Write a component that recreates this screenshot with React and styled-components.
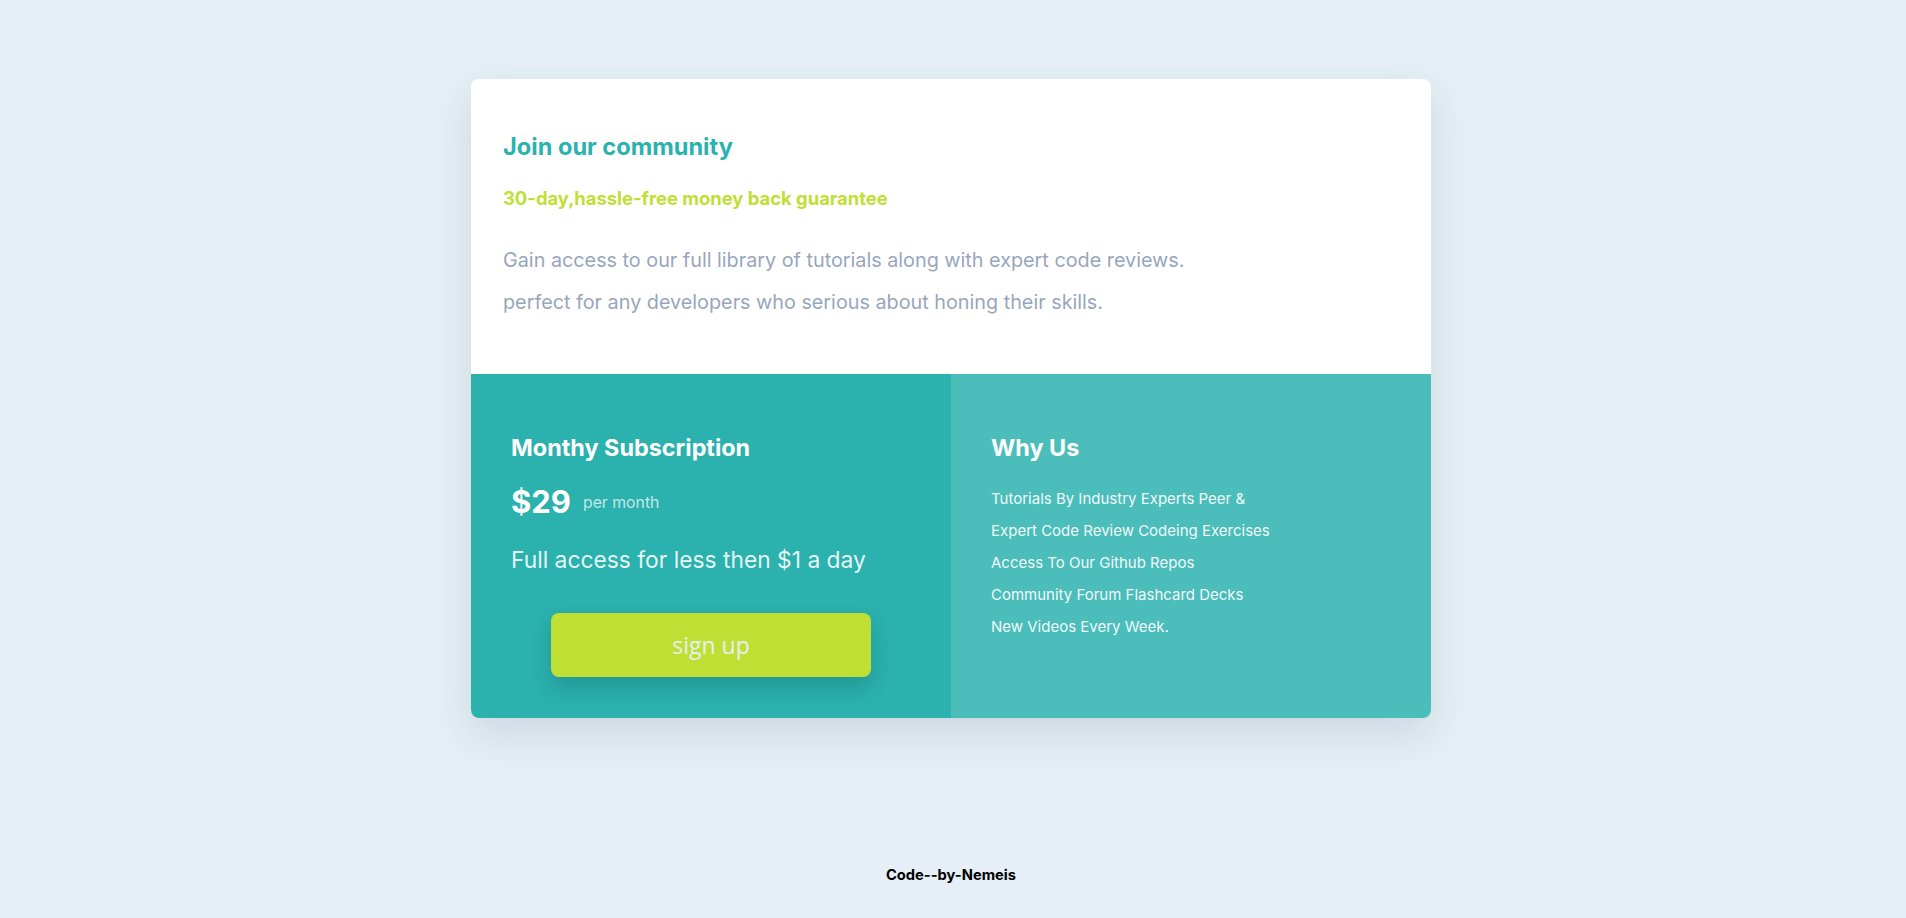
import React from "react";
import styled, { createGlobalStyle } from "styled-components";

const Global = createGlobalStyle`
  html, body { margin: 0; padding: 0; }
  body {
    background: #e5eff5;
    font-family: "Inter", "Lato", sans-serif;
  }
`;

const Page = styled.main`
  display: flex;
  flex-direction: column;
  align-items: center;
  padding: 79px 4px 0 0;
`;

const Card = styled.section`
  width: 960px;
  border-radius: 8px;
  overflow: hidden;
  background: #fff;
  box-shadow: 0 16px 40px rgba(90, 110, 140, 0.18);
`;

const Top = styled.div`
  padding: 53px 32px 40px;
  height: 295px;
  box-sizing: border-box;
`;

const Title = styled.h1`
  margin: 0;
  font-size: 23.6px;
  line-height: 30px;
  font-weight: 700;
  color: #2ab2af;
`;

const Guarantee = styled.h2`
  margin: 24px 0 0;
  font-size: 18.4px;
  line-height: 24px;
  font-weight: 700;
  color: #c0df34;
`;

const Text = styled.p`
  margin: 29px 0 0;
  font-size: 19.8px;
  line-height: 42px;
  color: #98a6bd;
`;

const Bottom = styled.div`
  display: grid;
  grid-template-columns: 1fr 1fr;
  height: 344px;
`;

const Col = styled.div`
  background: ${(p) => p.$bg};
  padding: 60px 40px 40px;
  color: #fff;
  box-sizing: border-box;
`;

const ColTitle = styled.h3`
  margin: 0;
  font-size: 23.4px;
  line-height: 28px;
  font-weight: 700;
`;

const PriceRow = styled.div`
  display: flex;
  align-items: center;
  gap: 12px;
  margin-top: 20px;
`;

const Price = styled.span`
  font-size: 31px;
  line-height: 40px;
  font-weight: 700;
`;

const Per = styled.span`
  font-size: 15.8px;
  color: rgba(255, 255, 255, 0.72);
`;

const Access = styled.p`
  margin: 23px 0 0;
  font-size: 22.8px;
  line-height: 30px;
  color: rgba(255, 255, 255, 0.9);
`;

const Button = styled.button`
  display: block;
  width: 320px;
  height: 64px;
  margin: 38px auto 0;
  border: none;
  border-radius: 8px;
  background: #c0df34;
  color: #e8f0f2;
  font-family: "Open Sans", sans-serif;
  font-size: 23px;
  box-shadow: 0 10px 20px rgba(0, 60, 60, 0.22);
  cursor: pointer;
`;

const List = styled.ul`
  list-style: none;
  margin: 21px 0 0;
  padding: 0;
`;

const Item = styled.li`
  font-size: 15px;
  line-height: 32px;
  color: rgba(255, 255, 255, 0.95);
`;

const Footer = styled.footer`
  margin-top: 148px;
  font-size: 14.7px;
  line-height: 18px;
  font-weight: 700;
  color: #000;
`;

const features = [
  "Tutorials By Industry Experts Peer &",
  "Expert Code Review Codeing Exercises",
  "Access To Our Github Repos",
  "Community Forum Flashcard Decks",
  "New Videos Every Week.",
];

export default function App() {
  return (
    <>
      <Global />
      <Page>
        <Card>
          <Top>
            <Title>Join our community</Title>
            <Guarantee>30-day,hassle-free money back guarantee</Guarantee>
            <Text>
              Gain access to our full library of tutorials along with expert code reviews.
              <br />
              perfect for any developers who serious about honing their skills.
            </Text>
          </Top>
          <Bottom>
            <Col $bg="#2bb1ae">
              <ColTitle>Monthy Subscription</ColTitle>
              <PriceRow>
                <Price>$29</Price>
                <Per>per month</Per>
              </PriceRow>
              <Access>Full access for less then $1 a day</Access>
              <Button>sign up</Button>
            </Col>
            <Col $bg="#4bbdbb">
              <ColTitle>Why Us</ColTitle>
              <List>
                {features.map((f) => (
                  <Item key={f}>{f}</Item>
                ))}
              </List>
            </Col>
          </Bottom>
        </Card>
        <Footer>Code--by-Nemeis</Footer>
      </Page>
    </>
  );
}
